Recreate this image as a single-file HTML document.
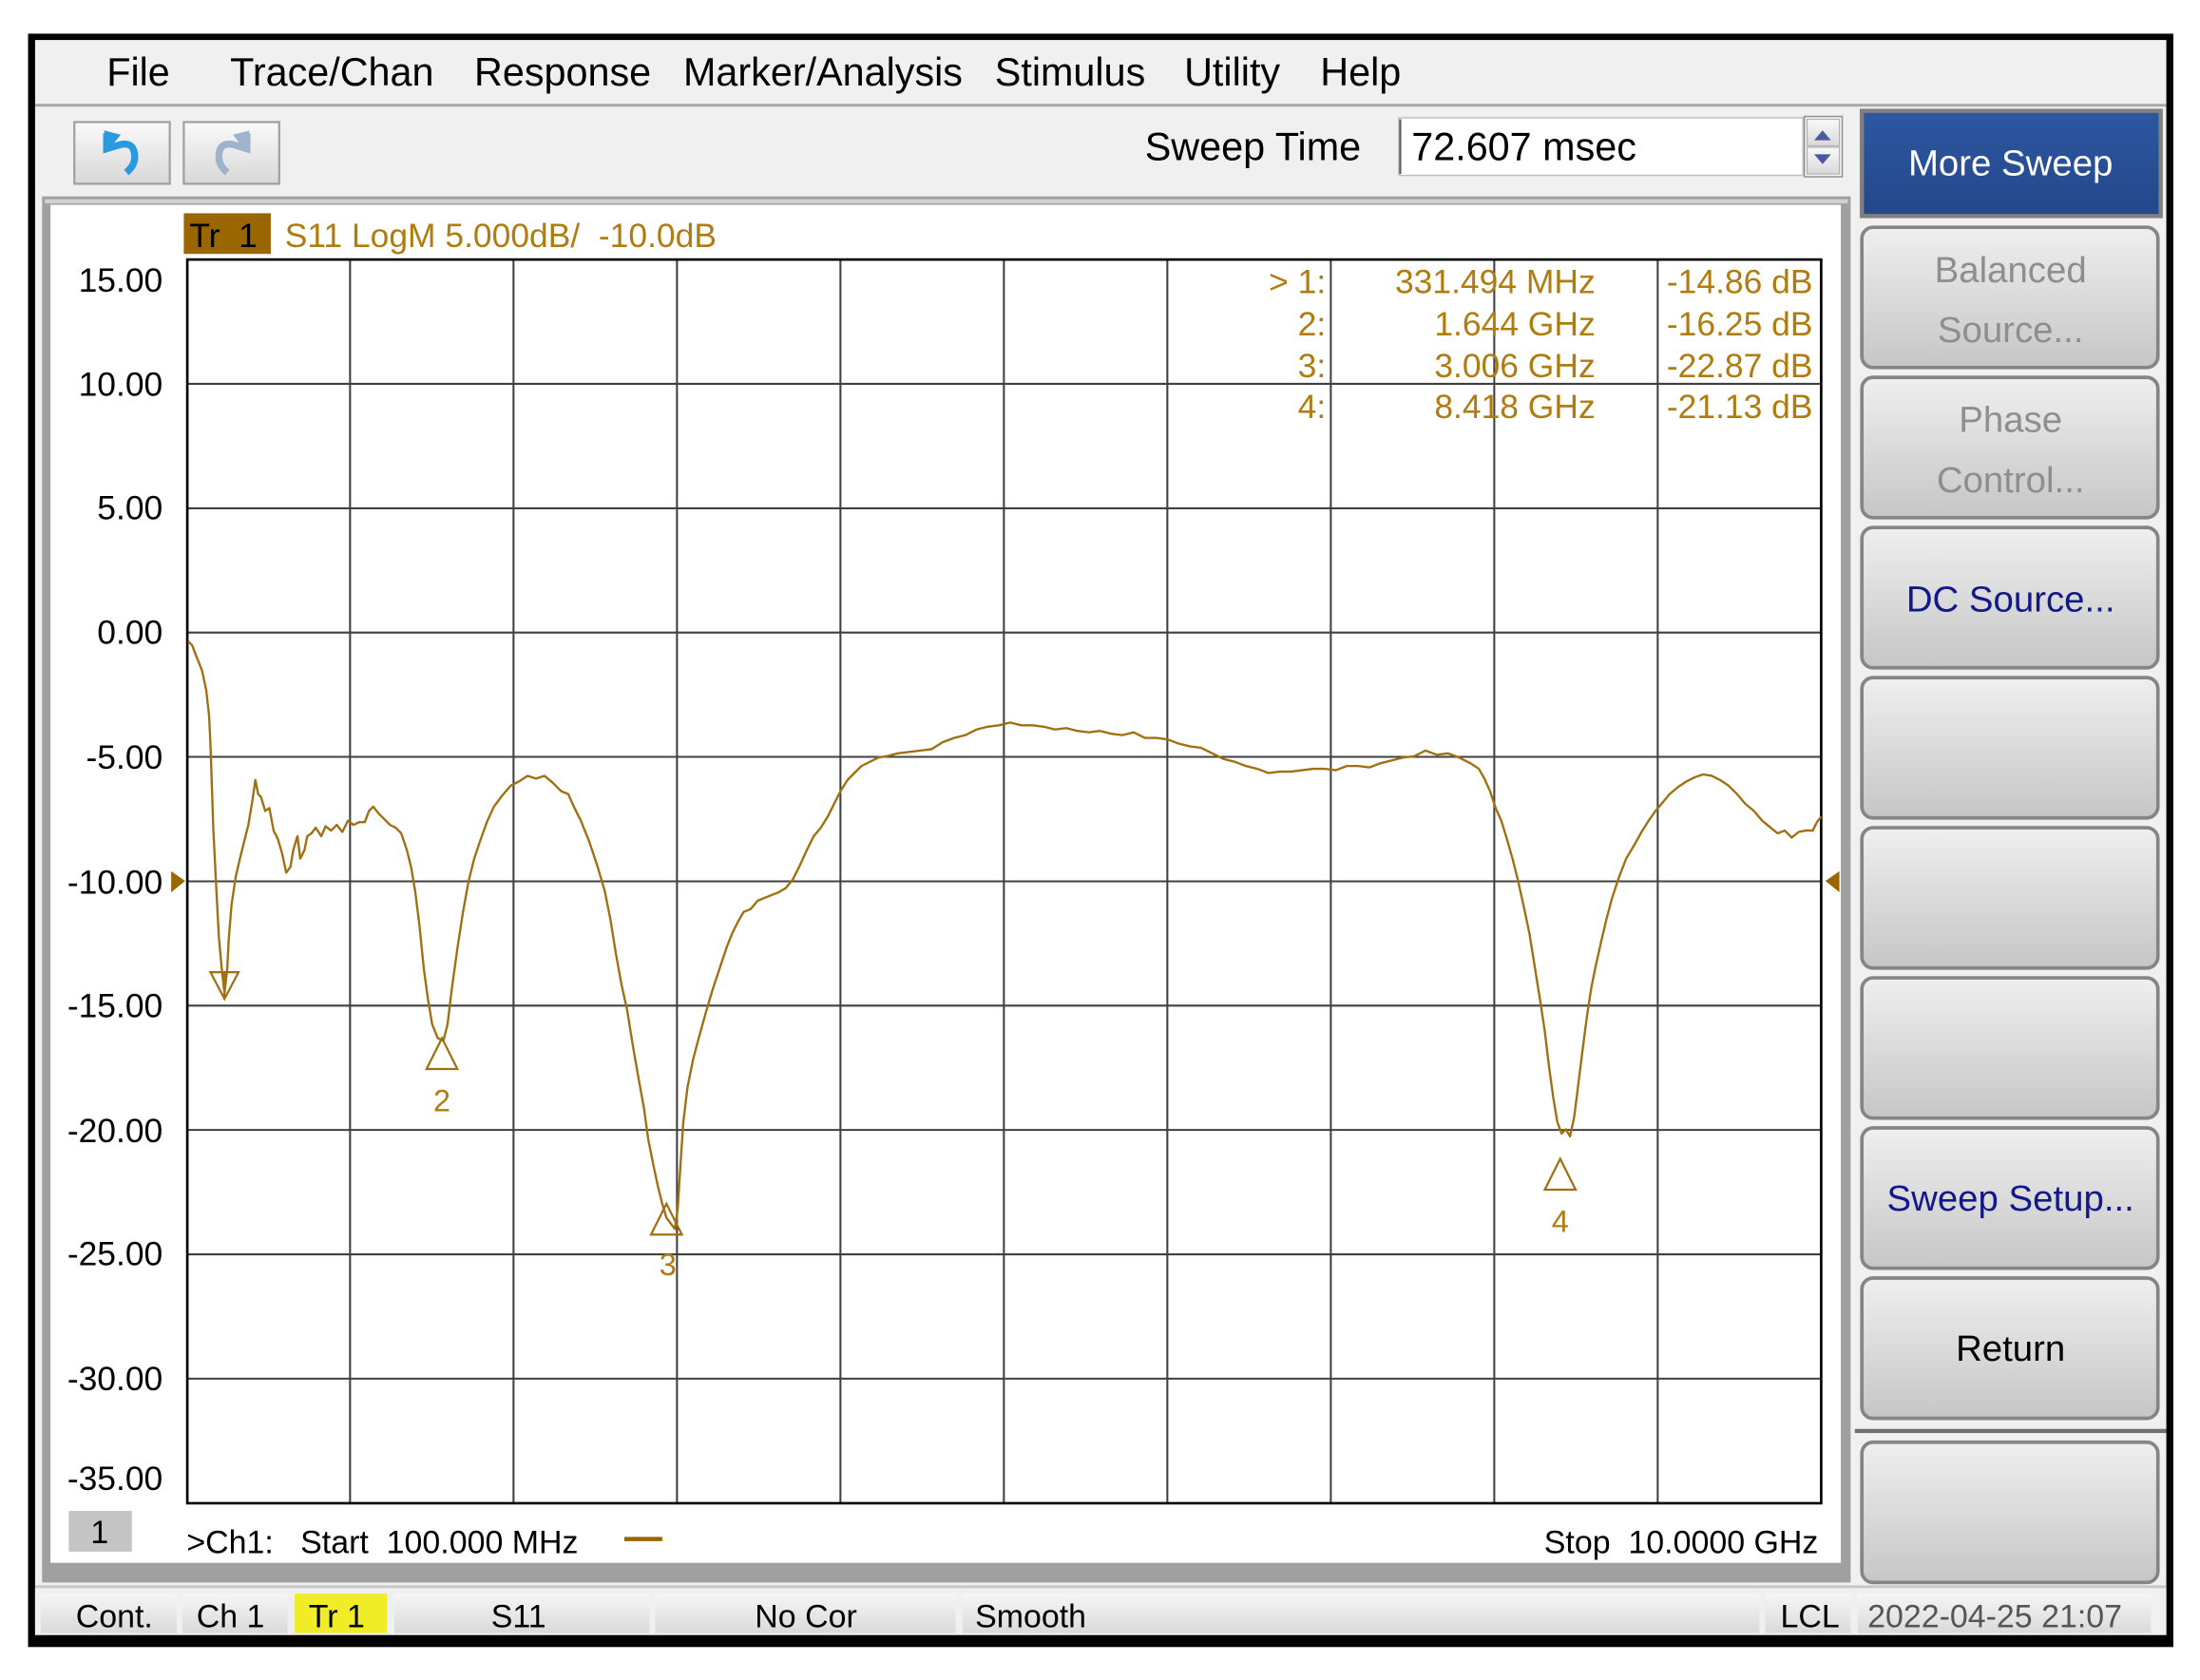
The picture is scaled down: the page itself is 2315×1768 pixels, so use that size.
<!DOCTYPE html>
<html><head><meta charset="utf-8"><style>
html,body{margin:0;padding:0;background:#fff;}
svg{display:block;}
text{font-family:"Liberation Sans",sans-serif;white-space:pre;}
</style></head><body>
<svg width="2315" height="1768" viewBox="0 0 1568 1197.5" xmlns="http://www.w3.org/2000/svg" xml:space="preserve">
<defs>
<linearGradient id="btn" x1="0" y1="0" x2="0" y2="1"><stop offset="0" stop-color="#efefef"/><stop offset="1" stop-color="#c6c6c6"/></linearGradient>
<linearGradient id="blue" x1="0" y1="0" x2="0" y2="1"><stop offset="0" stop-color="#2c58a2"/><stop offset="1" stop-color="#24478a"/></linearGradient>
<linearGradient id="cell" x1="0" y1="0" x2="0" y2="1"><stop offset="0" stop-color="#f6f6f6"/><stop offset="1" stop-color="#dadada"/></linearGradient>
<linearGradient id="tb" x1="0" y1="0" x2="0" y2="1"><stop offset="0" stop-color="#fafafa"/><stop offset="1" stop-color="#d8d8d8"/></linearGradient>
</defs>
<rect x="0" y="0" width="1568" height="1197.5" fill="#fff"/>
<rect x="20" y="24" width="1529" height="1150" fill="#000"/>
<rect x="25" y="28.5" width="1519" height="1137" fill="#f0f0f0"/>
<line x1="25" y1="75" x2="1544" y2="75" stroke="#a8a8a8" stroke-width="2"/>
<g font-size="28" fill="#000">
<text x="76" y="61">File</text><text x="164" y="61">Trace/Chan</text><text x="338" y="61">Response</text><text x="487" y="61">Marker/Analysis</text><text x="709" y="61">Stimulus</text><text x="844" y="61">Utility</text><text x="941" y="61">Help</text>
</g>
<rect x="53" y="87" width="68" height="44" fill="url(#tb)" stroke="#a0a0a0" stroke-width="1.5"/>
<rect x="131" y="87" width="68" height="44" fill="url(#tb)" stroke="#a0a0a0" stroke-width="1.5"/>
<path d="M76 95 L76 106 L86 103 Q96 101 96 112 Q96 118 90 123" fill="none" stroke="#2a9ae0" stroke-width="5"/>
<path d="M74 93 L86 96 L78 106 Z" fill="#2a9ae0"/>
<path d="M176 95 L176 106 L166 103 Q156 101 156 112 Q156 118 162 123" fill="none" stroke="#9fb3cc" stroke-width="5"/>
<path d="M178 93 L166 96 L174 106 Z" fill="#9fb3cc"/>
<text x="816" y="114" font-size="28">Sweep Time</text>
<rect x="997" y="84" width="288" height="41" fill="#fff" stroke="#c0c0c0"/>
<line x1="998" y1="85" x2="998" y2="124" stroke="#606060" stroke-width="1.5"/>
<text x="1006" y="114" font-size="28">72.607 msec</text>
<rect x="1286" y="83" width="27" height="43" fill="#f4f4f4" stroke="#909090"/>
<rect x="1288" y="85" width="23" height="19" fill="url(#tb)" stroke="#b0b0b0" stroke-width="0.8"/>
<rect x="1288" y="105" width="23" height="19" fill="url(#tb)" stroke="#b0b0b0" stroke-width="0.8"/>
<path d="M1293 100 L1299 93 L1305 100 Z" fill="#4a5aa0"/>
<path d="M1293 110 L1305 110 L1299 117 Z" fill="#4a5aa0"/>
<rect x="1327" y="79" width="213" height="75" fill="url(#blue)" stroke="#808080" stroke-width="3"/>
<text x="1433" y="125" font-size="26" fill="#fff" text-anchor="middle">More Sweep</text>
<g stroke="#858585" stroke-width="2.5" fill="url(#btn)">
<rect x="1327" y="162" width="211" height="100" rx="8"/>
<rect x="1327" y="269" width="211" height="100" rx="8"/>
<rect x="1327" y="376" width="211" height="100" rx="8"/>
<rect x="1327" y="483" width="211" height="100" rx="8"/>
<rect x="1327" y="590" width="211" height="100" rx="8"/>
<rect x="1327" y="697" width="211" height="100" rx="8"/>
<rect x="1327" y="804" width="211" height="100" rx="8"/>
<rect x="1327" y="911" width="211" height="100" rx="8"/>
<rect x="1327" y="1028" width="211" height="100" rx="8"/>
</g>
<line x1="1322" y1="1020" x2="1544" y2="1020" stroke="#707070" stroke-width="3"/>
<g font-size="26" text-anchor="middle">
<text x="1433" y="201" fill="#8e8e8e">Balanced</text><text x="1433" y="244" fill="#8e8e8e">Source...</text>
<text x="1433" y="308" fill="#8e8e8e">Phase</text><text x="1433" y="351" fill="#8e8e8e">Control...</text>
<text x="1433" y="436" fill="#10188a">DC Source...</text>
<text x="1433" y="863" fill="#10188a">Sweep Setup...</text>
<text x="1433" y="970" fill="#000">Return</text>
</g>
<rect x="30" y="140" width="1289" height="988" fill="#a0a0a0"/>
<rect x="32" y="142" width="1285" height="3" fill="#d0d0d0"/>
<rect x="36" y="146" width="1276" height="968" fill="#fff"/>
<rect x="131" y="152" width="62" height="29" fill="#9a6600"/>
<text x="135" y="176" font-size="24" fill="#000">Tr  1</text>
<text x="203" y="176" font-size="24" fill="#b07c10">S11 LogM 5.000dB/  -10.0dB</text>
<g stroke="#404040" stroke-width="1.4">
<line x1="249.5" y1="185" x2="249.5" y2="1071.5"/><line x1="366" y1="185" x2="366" y2="1071.5"/><line x1="482.5" y1="185" x2="482.5" y2="1071.5"/><line x1="599" y1="185" x2="599" y2="1071.5"/><line x1="715.5" y1="185" x2="715.5" y2="1071.5"/><line x1="832" y1="185" x2="832" y2="1071.5"/><line x1="948.5" y1="185" x2="948.5" y2="1071.5"/><line x1="1065" y1="185" x2="1065" y2="1071.5"/><line x1="1181.5" y1="185" x2="1181.5" y2="1071.5"/>
<line x1="133" y1="273.6" x2="1298" y2="273.6"/><line x1="133" y1="362.3" x2="1298" y2="362.3"/><line x1="133" y1="450.9" x2="1298" y2="450.9"/><line x1="133" y1="539.5" x2="1298" y2="539.5"/><line x1="133" y1="628.2" x2="1298" y2="628.2"/><line x1="133" y1="716.8" x2="1298" y2="716.8"/><line x1="133" y1="805.4" x2="1298" y2="805.4"/><line x1="133" y1="894.1" x2="1298" y2="894.1"/><line x1="133" y1="982.7" x2="1298" y2="982.7"/>
</g>
<rect x="133.5" y="185" width="1164.5" height="886.5" fill="none" stroke="#000" stroke-width="1.8"/>
<g font-size="24" fill="#000" text-anchor="end">
<text x="116" y="208">15.00</text><text x="116" y="282">10.00</text><text x="116" y="370">5.00</text><text x="116" y="459">0.00</text><text x="116" y="548">-5.00</text><text x="116" y="637">-10.00</text><text x="116" y="725">-15.00</text><text x="116" y="814">-20.00</text><text x="116" y="902">-25.00</text><text x="116" y="991">-30.00</text><text x="116" y="1062">-35.00</text>
</g>
<path d="M122 621 L132 628 L122 636 Z" fill="#9a6600"/>
<path d="M1311 621 L1301 628 L1311 636 Z" fill="#9a6600"/>
<g font-size="24" fill="#b07c10">
<g text-anchor="end"><text x="945" y="209">&gt; 1:</text><text x="945" y="239">2:</text><text x="945" y="269">3:</text><text x="945" y="298">4:</text>
<text x="1137" y="209">331.494 MHz</text><text x="1137" y="239">1.644 GHz</text><text x="1137" y="269">3.006 GHz</text><text x="1137" y="298">8.418 GHz</text>
<text x="1292" y="209">-14.86 dB</text><text x="1292" y="239">-16.25 dB</text><text x="1292" y="269">-22.87 dB</text><text x="1292" y="298">-21.13 dB</text></g>
</g>
<polyline fill="none" stroke="#a07010" stroke-width="1.6" stroke-linejoin="round" points="134,457 137,460 140,468 144,478 147,492 149,510 150,530 151,560 152,590 154,630 156,668 158,690 160,708 162,690 163,670 165,645 168,625 171,612 174,600 177,588 180,570 182,556 184,566 186,568 189,578 192,576 195,592 198,598 201,608 204,622 207,618 209,606 212,596 214,612 217,606 219,596 222,594 225,590 229,596 232,589 236,592 240,588 244,593 248,585 252,588 256,586 260,586 263,578 266,575 270,580 274,584 278,588 282,590 286,594 290,606 293,618 296,636 299,660 302,690 305,712 308,730 312,740 316,742 319,730 322,705 326,676 330,650 334,628 338,612 342,600 347,586 352,575 358,567 364,560 370,557 376,553 382,555 388,553 394,558 400,564 405,566 409,575 414,585 420,600 426,618 431,635 435,655 439,680 443,702 447,720 451,745 455,768 459,790 462,812 466,832 469,846 472,858 475,868 478,872 481,876 483,862 485,830 487,800 490,775 494,755 498,740 503,722 508,705 513,690 518,675 522,665 526,657 530,650 535,648 540,642 545,640 550,638 555,636 560,633 565,627 570,617 575,606 580,596 585,590 590,582 595,572 599,564 604,556 609,551 614,546 620,543 626,540 632,539 640,537 648,536 656,535 664,534 672,529 680,526 688,524 696,520 704,518 712,517 720,515 728,517 736,517 744,518 752,520 760,519 768,521 776,522 784,521 792,523 800,524 808,522 816,526 824,526 832,527 840,530 848,532 856,533 864,537 872,541 880,543 888,546 896,548 904,551 912,550 920,550 928,549 936,548 944,548 952,549 960,546 968,546 976,547 984,544 992,542 1000,540 1008,539 1016,535 1024,538 1032,537 1040,540 1048,544 1054,548 1058,555 1062,564 1066,576 1070,585 1074,598 1078,612 1082,628 1086,646 1090,665 1094,690 1098,715 1101,735 1104,760 1107,782 1110,800 1113,808 1116,805 1119,810 1122,796 1125,772 1128,748 1131,725 1134,705 1137,690 1141,672 1145,655 1149,640 1154,625 1159,612 1165,602 1170,593 1175,585 1180,578 1185,572 1190,566 1196,561 1202,557 1208,554 1214,552 1220,553 1226,556 1232,560 1238,566 1244,573 1250,578 1256,585 1262,590 1267,594 1272,592 1277,597 1282,593 1287,592 1292,592 1295,586 1298,582"/>
<g fill="none" stroke="#a07010" stroke-width="1.5">
<path d="M150 693 L170 693 L160 712 Z"/><line x1="160" y1="693" x2="160" y2="712"/>
<path d="M315 740 L304 762 L326 762 Z"/>
<path d="M475 858 L464 880 L486 880 Z"/>
<path d="M1112 826 L1101 848 L1123 848 Z"/>
</g>
<g font-size="22" fill="#b07c10" text-anchor="middle"><text x="315" y="792">2</text><text x="476" y="909">3</text><text x="1112" y="878">4</text></g>
<rect x="49" y="1077" width="45" height="29" fill="#c4c4c4"/>
<text x="71" y="1100" font-size="23" text-anchor="middle">1</text>
<text x="133" y="1107" font-size="23">&gt;Ch1:   Start  100.000 MHz</text>
<line x1="445" y1="1097" x2="472" y2="1097" stroke="#9a6600" stroke-width="3"/>
<text x="1296" y="1107" font-size="23" text-anchor="end">Stop  10.0000 GHz</text>
<rect x="25" y="1131" width="1519" height="34" fill="#f0f0f0"/>
<line x1="25" y1="1131" x2="1544" y2="1131" stroke="#c8c8c8" stroke-width="2"/>
<g fill="url(#cell)">
<rect x="29" y="1136" width="97" height="28"/><rect x="130" y="1136" width="75" height="28"/><rect x="281" y="1136" width="182" height="28"/><rect x="467" y="1136" width="214" height="28"/><rect x="686" y="1136" width="568" height="28"/><rect x="1258" y="1136" width="61" height="28"/><rect x="1324" y="1136" width="209" height="28"/>
</g>
<rect x="210" y="1136" width="66" height="28" fill="#f0ec28"/>
<g font-size="23" fill="#000">
<text x="54" y="1160">Cont.</text><text x="140" y="1160">Ch 1</text><text x="220" y="1160">Tr 1</text><text x="350" y="1160">S11</text><text x="538" y="1160">No Cor</text><text x="695" y="1160">Smooth</text><text x="1269" y="1160">LCL</text><text x="1331" y="1160" fill="#555">2022-04-25 21:07</text>
</g>
</svg>
</body></html>
